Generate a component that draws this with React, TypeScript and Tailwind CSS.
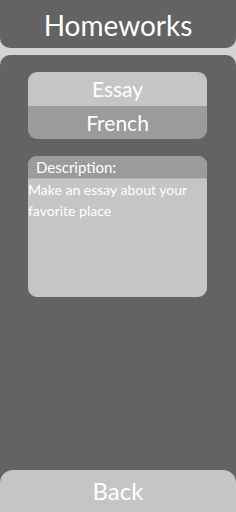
export default function App() {
  return (
    <div
      className="flex h-[512px] w-[236px] flex-col bg-[#d3d3d3] text-white"
      style={{ fontFamily: "Lato, 'Noto Sans', sans-serif" }}
    >
      <header className="flex h-[48px] shrink-0 items-center justify-center rounded-b-[10px] bg-[#636363]">
        <h1 className="pt-[2px] text-[28px] leading-none">Homeworks</h1>
      </header>

      <main className="mt-[7px] flex flex-1 flex-col rounded-t-[10px] bg-[#636363]">
        <div className="ml-[28px] mr-[29px] mt-[17px] flex flex-col overflow-hidden rounded-[9px]">
          <div className="flex h-[34px] items-center justify-center bg-[#c5c5c5] text-[21px]">
            Essay
          </div>
          <div className="flex h-[33px] items-center justify-center bg-[#9b9b9b] text-[21px]">
            French
          </div>
        </div>

        <div className="ml-[28px] mr-[29px] mt-[17px] flex h-[141px] flex-col overflow-hidden rounded-[9px] bg-[#c5c5c5]">
          <div className="flex h-[23px] items-center border-b border-[#b4b4b4] bg-[#9b9b9b] pl-[8px] text-[15px]">
            Description:
          </div>
          <p className="text-[14px] leading-[21px]">
            Make an essay about your favorite place
          </p>
        </div>

        <div className="flex-1" />

        <button className="flex h-[42px] items-center justify-center rounded-t-[13px] bg-[#c5c5c5] text-[24px] text-white">
          Back
        </button>
      </main>
    </div>
  );
}
